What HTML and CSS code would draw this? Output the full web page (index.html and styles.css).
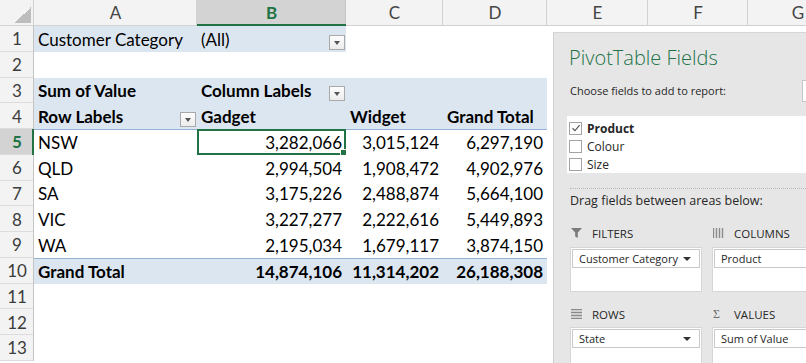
FILE: index.html
```html
<!DOCTYPE html>
<html lang="en">
<head>
    <meta charset="UTF-8">
    <meta name="viewport" content="width=device-width, initial-scale=1.0">
    <title>PivotTable Fields</title>
    <link rel="stylesheet" href="styles.css">
</head>
<body>

    <div class="window">
        <table class="sheet">
            <colgroup>
                <col class="c-rh"><col class="c-a"><col class="c-b"><col class="c-c"><col class="c-d"><col class="c-e"><col class="c-f"><col class="c-g">
            </colgroup>
            <thead>
                <tr>
                    <th class="corner"></th>
                    <th>A</th><th class="sel">B</th><th>C</th><th>D</th><th>E</th><th>F</th><th>G</th>
                </tr>
            </thead>
            <tbody>
                <tr>
                    <th>1</th>
                    <td class="pv">Customer Category</td>
                    <td class="pv"><div class="split">(All)<span class="dd"></span></div></td>
                    <td></td><td></td><td></td><td></td><td></td>
                </tr>
                <tr>
                    <th>2</th>
                    <td></td><td></td><td></td><td></td><td></td><td></td><td></td>
                </tr>
                <tr>
                    <th>3</th>
                    <td class="pv b">Sum of Value</td>
                    <td class="pv b"><div class="split">Column Labels<span class="dd"></span></div></td>
                    <td class="pv"></td><td class="pv"></td>
                    <td></td><td></td><td></td>
                </tr>
                <tr>
                    <th>4</th>
                    <td class="pv b"><div class="split">Row Labels<span class="dd"></span></div></td>
                    <td class="pv b">Gadget</td>
                    <td class="pv b">Widget</td>
                    <td class="pv b">Grand Total</td>
                    <td></td><td></td><td></td>
                </tr>
                <tr>
                    <th class="sel">5</th>
                    <td class="line">NSW</td>
                    <td class="line num active">3,282,066</td>
                    <td class="line num">3,015,124</td>
                    <td class="line num">6,297,190</td>
                    <td></td><td></td><td></td>
                </tr>
                <tr>
                    <th>6</th>
                    <td>QLD</td><td class="num">2,994,504</td><td class="num">1,908,472</td><td class="num">4,902,976</td>
                    <td></td><td></td><td></td>
                </tr>
                <tr>
                    <th>7</th>
                    <td>SA</td><td class="num">3,175,226</td><td class="num">2,488,874</td><td class="num">5,664,100</td>
                    <td></td><td></td><td></td>
                </tr>
                <tr>
                    <th>8</th>
                    <td>VIC</td><td class="num">3,227,277</td><td class="num">2,222,616</td><td class="num">5,449,893</td>
                    <td></td><td></td><td></td>
                </tr>
                <tr>
                    <th>9</th>
                    <td>WA</td><td class="num">2,195,034</td><td class="num">1,679,117</td><td class="num">3,874,150</td>
                    <td></td><td></td><td></td>
                </tr>
                <tr>
                    <th>10</th>
                    <td class="pv b line">Grand Total</td>
                    <td class="pv b line num">14,874,106</td>
                    <td class="pv b line num">11,314,202</td>
                    <td class="pv b line num">26,188,308</td>
                    <td></td><td></td><td></td>
                </tr>
                <tr><th>11</th><td></td><td></td><td></td><td></td><td></td><td></td><td></td></tr>
                <tr><th>12</th><td></td><td></td><td></td><td></td><td></td><td></td><td></td></tr>
                <tr><th>13</th><td></td><td></td><td></td><td></td><td></td><td></td><td></td></tr>
            </tbody>
        </table>

        <!-- panel flotante encima de la hoja -->
        <aside class="pane">
            <div class="pane-title">PivotTable Fields</div>
            <div class="pane-row">
                <span class="hint">Choose fields to add to report:</span>
                <span class="gear"></span>
            </div>

            <ul class="fields">
                <li class="on"><span class="cb"><svg width="10" height="10" viewBox="0 0 10 10"><path d="M1.5 5.2 L4 7.6 L8.6 2.2" fill="none" stroke="#5a5a5a" stroke-width="1.2"/></svg></span>Product</li>
                <li><span class="cb"></span>Colour</li>
                <li><span class="cb"></span>Size</li>
            </ul>

            <div class="sep"></div>
            <div class="hint drag">Drag fields between areas below:</div>

            <div class="areas">
                <div class="area-h">
                    <svg width="11" height="10" viewBox="0 0 11 10"><path d="M0 0 H11 L6.8 4.6 V10 L4.2 8.6 V4.6 Z" fill="#7b7b7b"/></svg>
                    FILTERS
                </div>
                <div class="area-h">
                    <svg width="11" height="10" viewBox="0 0 11 10"><path d="M0.5 0 V10 M3.5 0 V10 M6.5 0 V10 M9.5 0 V10" stroke="#8a8a8a" stroke-width="1.4"/></svg>
                    COLUMNS
                </div>
                <div class="area"><div class="chip">Customer Category<span class="caret"></span></div></div>
                <div class="area"><div class="chip">Product</div></div>

                <div class="area-h low">
                    <svg width="11" height="10" viewBox="0 0 11 10"><path d="M0 0.5 H11 M0 3.5 H11 M0 6.5 H11 M0 9.5 H11" stroke="#8a8a8a" stroke-width="1.4"/></svg>
                    ROWS
                </div>
                <div class="area-h low">
                    <span class="sigma">&Sigma;</span>
                    VALUES
                </div>
                <div class="area"><div class="chip">State<span class="caret"></span></div></div>
                <div class="area"><div class="chip">Sum of Value</div></div>
            </div>
        </aside>
    </div>

</body>
</html>
```

FILE: styles.css
```css
body {
    margin: 0;
    padding: 0;
    background-color: #fff;
    color: #000;
    font-family: Lato, "Liberation Sans", sans-serif;
}

.window {
    position: relative;
    width: 806px;
    height: 363px;
    overflow: hidden;
}

/* hoja de calculo */
.sheet {
    table-layout: fixed;
    border-collapse: separate;
    border-spacing: 0;
    width: 848px;
    font-size: 17px;
}

.c-rh { width: 34px; }
.c-a { width: 163px; }
.c-b { width: 149px; }
.c-c { width: 97px; }
.c-d { width: 104px; }
.c-e { width: 101px; }
.c-f { width: 100px; }
.c-g { width: 100px; }

.sheet thead tr {
    height: 26px;
}

.sheet tbody tr {
    height: 25.75px;
}

.sheet th,
.sheet td {
    padding: 0 4px;
    white-space: nowrap;
    overflow: hidden;
    line-height: 20px;
}

.sheet td {
    vertical-align: bottom;
    line-height: 22px;
    padding-bottom: 1px;
}

.sheet thead th {
    background-color: #f3f3f3;
    color: #444;
    font-weight: normal;
    box-shadow: inset -1px -1px 0 #d2d2d2;
}

.sheet thead th.corner {
    background: linear-gradient(135deg, transparent 50%, #bdbdbd 50%) no-repeat right 3px bottom 3px / 16px 16px, #f3f3f3;
}

.sheet thead th.sel {
    background-color: #d3d3d3;
    color: #217346;
    font-weight: bold;
    box-shadow: inset 0 -2px 0 #217346, inset -1px 0 0 #c4c4c4;
}

.sheet tbody th {
    background-color: #f3f3f3;
    color: #3c3c3c;
    font-weight: normal;
    text-align: center;
    padding: 1px 0 0 0;
    box-shadow: inset -1px 0 0 #c4c4c4, inset 0 -1px 0 #dcdcdc;
}

.sheet tbody th.sel {
    background-color: #d3d3d3;
    color: #217346;
    font-weight: bold;
    box-shadow: inset -2px 0 0 #217346, inset 0 -1px 0 #dcdcdc;
}

.pv {
    background-color: #dce6f1;
}

.b {
    font-weight: bold;
}

.num {
    text-align: right;
}

.line {
    box-shadow: inset 0 1px 0 #95b3d7;
}

.active {
    position: relative;
    box-shadow: inset 0 0 0 2px #217346;
}

.active::after {
    content: "";
    position: absolute;
    right: -1px;
    bottom: -1px;
    width: 5px;
    height: 5px;
    background-color: #217346;
    border: 1px solid #fff;
}

.split {
    display: flex;
    justify-content: space-between;
    margin-right: -3px;
}

.dd {
    align-self: flex-end;
    display: flex;
    align-items: center;
    justify-content: center;
    width: 14px;
    height: 13px;
    margin-bottom: 1px;
    border: 1px solid #a9a9a9;
    background: linear-gradient(#fdfdfd, #ececec);
}

.dd::before {
    content: "";
    border-left: 3.5px solid transparent;
    border-right: 3.5px solid transparent;
    border-top: 4px solid #555;
    margin-top: 1px;
}

/* panel de campos */
.pane {
    position: absolute;
    left: 553px;
    top: 32px;
    width: 274px;
    height: 340px;
    padding: 12px 16px 0 16px;
    background-color: #e6e6e6;
    border-left: 1px solid #cfcfcf;
    border-top: 1px solid #d6d6d6;
    font-family: "Open Sans", "Noto Sans", sans-serif;
    font-size: 11px;
    color: #262626;
}

.pane-title {
    font-size: 20px;
    font-weight: 300;
    line-height: 26px;
    color: #217346;
    margin-left: -1px;
}

.pane-row {
    display: flex;
    justify-content: space-between;
    align-items: center;
    margin-top: 9px;
    height: 22px;
}

.gear {
    width: 40px;
    height: 20px;
    background-color: #fff;
    border: 1px solid #c6c6c6;
}

.hint {
    line-height: 18px;
}

.hint.drag {
    font-size: 12.5px;
}

.fields {
    list-style: none;
    margin: 14px 0 0 -3px;
    padding: 3px 2px 0 2px;
    height: 54px;
    background-color: #fff;
    font-size: 12px;
}

.fields li {
    display: flex;
    align-items: center;
    height: 18px;
}

.fields li.on {
    font-weight: bold;
}

.cb {
    display: flex;
    align-items: center;
    justify-content: center;
    width: 11px;
    height: 11px;
    border: 1px solid #a3a3a3;
    background-color: #fff;
    margin-right: 5px;
}

.sep {
    margin-top: 15px;
    border-top: 1px dotted #b8b8b8;
    height: 3px;
}

.areas {
    display: grid;
    grid-template-columns: 132px 132px;
    column-gap: 10px;
    margin-top: 14px;
}

.area-h {
    display: flex;
    align-items: center;
    gap: 10px;
    height: 18px;
    margin-bottom: 5px;
    padding-left: 1px;
    font-size: 11.5px;
}

.area-h.low {
    margin-top: 13px;
    margin-bottom: 4px;
}

.sigma {
    color: #6e6e6e;
    font-family: "Liberation Serif", serif;
    font-size: 12px;
    width: 11px;
}

.area {
    height: 45px;
    background-color: #fff;
    border: 1px solid #d6d6d6;
    box-sizing: border-box;
    padding: 1px;
}

.chip {
    display: flex;
    justify-content: space-between;
    align-items: center;
    height: 17px;
    padding: 0 8px 0 6px;
    border: 1px solid #c9c9c9;
    background-color: #fff;
}

.caret {
    border-left: 4px solid transparent;
    border-right: 4px solid transparent;
    border-top: 4px solid #333;
}
```
